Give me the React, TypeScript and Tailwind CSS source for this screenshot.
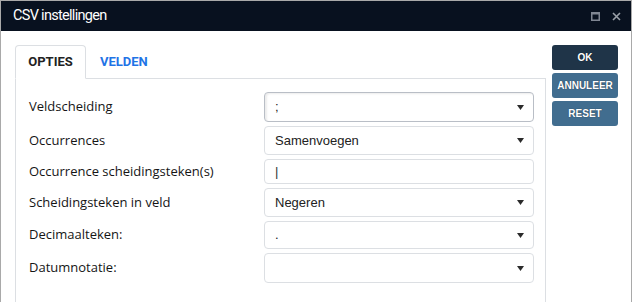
import React from 'react';

type Field = {
  label: string;
  kind: 'select' | 'input';
  value: string;
  h: string;
};

const fields: Field[] = [
  { label: 'Veldscheiding', kind: 'select', value: ';', h: 'h-[30px]' },
  { label: 'Occurrences', kind: 'select', value: 'Samenvoegen', h: 'h-[29px]' },
  { label: 'Occurrence scheidingsteken(s)', kind: 'input', value: '|', h: 'h-[25px]' },
  { label: 'Scheidingsteken in veld', kind: 'select', value: 'Negeren', h: 'h-[29px]' },
  { label: 'Decimaalteken:', kind: 'select', value: '.', h: 'h-[28px]' },
  { label: 'Datumnotatie:', kind: 'select', value: '', h: 'h-[30px]' },
];

function Arrow() {
  return (
    <svg width="7" height="5" viewBox="0 0 7 5" className="shrink-0">
      <path d="M0 0 L7 0 L3.5 5 Z" fill="#2b2b2b" />
    </svg>
  );
}

export default function App() {
  return (
    <div className="w-[632px] h-[302px] overflow-hidden bg-white border-t border-x border-[#a9a9a9] flex flex-col">
      {/* Title bar */}
      <div className="h-[30px] bg-[#08111f] flex items-center justify-between pl-3 pr-[10px] shrink-0">
        <span className="text-white text-[14.5px] leading-none tracking-[-0.7px]" style={{ fontFamily: 'Roboto, sans-serif' }}>
          CSV instellingen
        </span>
        <div className="flex items-center gap-[12px]">
          <svg width="9" height="9" viewBox="0 0 9 9">
            <rect x="0.75" y="0.75" width="7.5" height="7.5" fill="none" stroke="#7f8692" strokeWidth="1.5" />
            <rect x="0" y="0" width="9" height="2.5" fill="#7f8692" />
          </svg>
          <svg width="9" height="9" viewBox="0 0 9 9">
            <path d="M1 1 L8 8 M8 1 L1 8" stroke="#9aa0a8" strokeWidth="1.6" />
          </svg>
        </div>
      </div>

      {/* Body */}
      <div className="flex flex-1 pt-[14px] pl-[14px] gap-[6px]">
        {/* Tabs + panel */}
        <div className="w-[531px] flex flex-col">
          <div className="flex items-end border-b border-[#dcdfe3] h-[34px]" style={{ fontFamily: 'Roboto, sans-serif' }}>
            <div className="h-[34px] w-[71px] -mb-px bg-white border border-b-white border-[#dcdfe3] rounded-t-[4px] flex items-center justify-center text-[13px] font-bold text-[#222]">
              OPTIES
            </div>
            <div className="h-[33px] flex items-center pl-[14px] text-[13px] font-bold text-[#1f74e6]">
              VELDEN
            </div>
          </div>
          <div className="flex-1 border-x border-[#dcdfe3] pt-[13px] pl-[13px] pr-[11px] flex flex-col gap-[4px]">
            {fields.map((f, i) => (
              <div key={f.label} className="flex items-center">
                <div className="w-[235px] text-[13px] text-[#151515]" style={{ fontFamily: '"Open Sans", sans-serif' }}>
                  {f.label}
                </div>
                <div
                  className={`flex-1 ${f.h} rounded-[4px] border bg-white flex items-center justify-between pl-[10px] pr-[9px] text-[13px] text-[#222] ${
                    i === 0 ? 'border-[#b9bec6] shadow-[inset_2px_1px_2px_rgba(0,0,0,0.08)]' : 'border-[#dcdfe3]'
                  }`}
                  style={{ fontFamily: '"Liberation Sans", Arial, sans-serif' }}
                >
                  <span className={f.kind === 'input' ? 'font-light text-[#333]' : ''}>{f.value}</span>
                  {f.kind === 'select' && <Arrow />}
                </div>
              </div>
            ))}
          </div>
        </div>

        {/* Buttons */}
        <div className="w-[66px] flex flex-col gap-[3px]" style={{ fontFamily: '"Liberation Sans", Arial, sans-serif' }}>
          <button className="h-[25px] rounded-[3px] bg-[#1f3448] text-white text-[10px] font-bold [text-shadow:0_0_1px_rgba(0,0,0,0.6)]">
            OK
          </button>
          <button className="h-[25px] rounded-[3px] bg-[#416d8f] text-white text-[10px] font-bold [text-shadow:0_0_1px_rgba(0,0,0,0.6)]">
            ANNULEER
          </button>
          <button className="h-[25px] rounded-[3px] bg-[#416d8f] text-white text-[10px] font-bold [text-shadow:0_0_1px_rgba(0,0,0,0.6)]">
            RESET
          </button>
        </div>
      </div>
    </div>
  );
}
